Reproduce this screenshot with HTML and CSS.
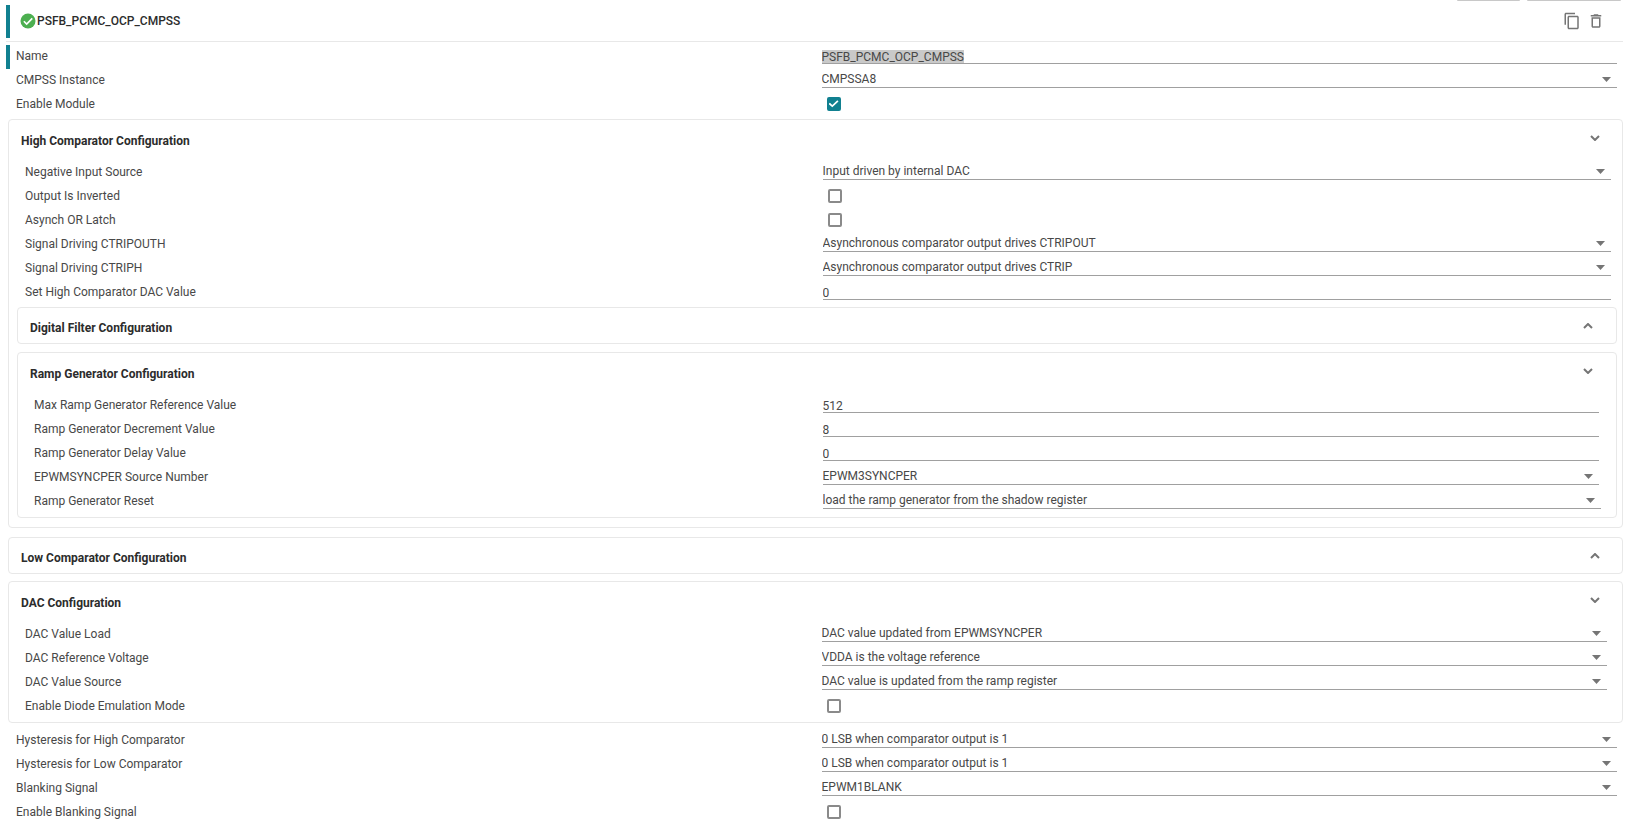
FILE: index.html
```html
<!DOCTYPE html>
<html lang="en">
<head>
<meta charset="utf-8">
<meta name="viewport" content="width=device-width, initial-scale=1">
<title>PSFB_PCMC_OCP_CMPSS</title>
<link rel="stylesheet" href="styles.css">
</head>
<body>
<div class="toolbar-edge" aria-hidden="true"><span class="edge edge-short"></span><span class="edge edge-long"></span></div>
<main class="module">
  <header class="module-header">
    <svg class="status" viewBox="0 0 24 24" aria-hidden="true"><circle cx="12" cy="12" r="10" fill="#4caf50"/><path d="M6.500 12.300l3.700 3.700 7.500-7.600" fill="none" stroke="#fff" stroke-width="2.200"/></svg>
    <h1 class="module-title">PSFB_PCMC_OCP_CMPSS</h1>
    <button class="icon-button" type="button" aria-label="Duplicate"><svg class="icon" viewBox="0 0 24 24"><path d="M16 1H4c-1.100 0-2 .9-2 2v14h2V3h12V1zm3 4H8c-1.100 0-2 .9-2 2v14c0 1.100.9 2 2 2h11c1.100 0 2-.9 2-2V7c0-1.100-.9-2-2-2zm0 16H8V7h11v14z"/></svg></button>
    <button class="icon-button" type="button" aria-label="Delete"><svg class="icon" viewBox="0 0 24 24"><path d="M6 19c0 1.100.9 2 2 2h8c1.100 0 2-.9 2-2V7H6v12zM8 9h8v10H8V9zm7.500-5l-1-1h-5l-1 1H5v2h14V4z"/></svg></button>
  </header>

  <div class="rows rows-top">
    <div class="row changed"><label for="name">Name</label><input class="text" id="name" type="text" value="PSFB_PCMC_OCP_CMPSS"></div>
    <div class="row"><label for="instance">CMPSS Instance</label><span class="drop"><select id="instance"><option>CMPSSA8</option></select></span></div>
    <div class="row"><label for="enable">Enable Module</label><input class="check" id="enable" type="checkbox" checked></div>
  </div>

  <section class="card card-high">
    <button class="card-header" type="button" aria-expanded="true"><span>High Comparator Configuration</span><svg class="chevron" viewBox="0 0 10 6" aria-hidden="true"><path d="M1 1l4 4 4-4"/></svg></button>
    <div class="rows">
      <div class="row"><label for="neg">Negative Input Source</label><span class="drop"><select id="neg"><option>Input driven by internal DAC</option></select></span></div>
      <div class="row"><label for="inv">Output Is Inverted</label><input class="check" id="inv" type="checkbox"></div>
      <div class="row"><label for="latch">Asynch OR Latch</label><input class="check" id="latch" type="checkbox"></div>
      <div class="row"><label for="tripout">Signal Driving CTRIPOUTH</label><span class="drop"><select id="tripout"><option>Asynchronous comparator output drives CTRIPOUT</option></select></span></div>
      <div class="row"><label for="trip">Signal Driving CTRIPH</label><span class="drop"><select id="trip"><option>Asynchronous comparator output drives CTRIP</option></select></span></div>
      <div class="row"><label for="dacval">Set High Comparator DAC Value</label><input class="text" id="dacval" type="text" value="0"></div>
    </div>
    <div class="nested">
      <section class="card">
        <button class="card-header" type="button" aria-expanded="false"><span>Digital Filter Configuration</span><svg class="chevron" viewBox="0 0 10 6" aria-hidden="true"><path d="M1 5l4-4 4 4"/></svg></button>
      </section>
      <section class="card card-ramp">
        <button class="card-header" type="button" aria-expanded="true"><span>Ramp Generator Configuration</span><svg class="chevron" viewBox="0 0 10 6" aria-hidden="true"><path d="M1 1l4 4 4-4"/></svg></button>
        <div class="rows">
          <div class="row"><label for="maxref">Max Ramp Generator Reference Value</label><input class="text" id="maxref" type="text" value="512"></div>
          <div class="row"><label for="decr">Ramp Generator Decrement Value</label><input class="text" id="decr" type="text" value="8"></div>
          <div class="row"><label for="delay">Ramp Generator Delay Value</label><input class="text" id="delay" type="text" value="0"></div>
          <div class="row"><label for="sync">EPWMSYNCPER Source Number</label><span class="drop"><select id="sync"><option>EPWM3SYNCPER</option></select></span></div>
          <div class="row row-wide"><label for="reset">Ramp Generator Reset</label><span class="drop"><select id="reset"><option>load the ramp generator from the shadow register</option></select></span></div>
        </div>
      </section>
    </div>
  </section>

  <section class="card card-low">
    <button class="card-header" type="button" aria-expanded="false"><span>Low Comparator Configuration</span><svg class="chevron" viewBox="0 0 10 6" aria-hidden="true"><path d="M1 5l4-4 4 4"/></svg></button>
  </section>

  <section class="card card-dac">
    <button class="card-header" type="button" aria-expanded="true"><span>DAC Configuration</span><svg class="chevron" viewBox="0 0 10 6" aria-hidden="true"><path d="M1 1l4 4 4-4"/></svg></button>
    <div class="rows">
      <div class="row"><label for="load">DAC Value Load</label><span class="drop"><select id="load"><option>DAC value updated from EPWMSYNCPER</option></select></span></div>
      <div class="row"><label for="ref">DAC Reference Voltage</label><span class="drop"><select id="ref"><option>VDDA is the voltage reference</option></select></span></div>
      <div class="row"><label for="source">DAC Value Source</label><span class="drop"><select id="source"><option>DAC value is updated from the ramp register</option></select></span></div>
      <div class="row"><label for="diode">Enable Diode Emulation Mode</label><input class="check" id="diode" type="checkbox"></div>
    </div>
  </section>

  <div class="rows rows-bottom">
    <div class="row"><label for="hysh">Hysteresis for High Comparator</label><span class="drop"><select id="hysh"><option>0 LSB when comparator output is 1</option></select></span></div>
    <div class="row"><label for="hysl">Hysteresis for Low Comparator</label><span class="drop"><select id="hysl"><option>0 LSB when comparator output is 1</option></select></span></div>
    <div class="row"><label for="blank">Blanking Signal</label><span class="drop"><select id="blank"><option>EPWM1BLANK</option></select></span></div>
    <div class="row"><label for="blanken">Enable Blanking Signal</label><input class="check" id="blanken" type="checkbox"></div>
  </div>
</main>
<script src="script.js"></script>
</body>
</html>
```

FILE: styles.css
```css
* { box-sizing: border-box; }

body {
  margin: 0;
  background: #fff;
  color: #484848;
  font: 12px/20px Roboto, "Liberation Sans", sans-serif;
  overflow-x: hidden;
}

button, input, select { font: inherit; color: inherit; }

/* Lower shadow of the page toolbar's buttons, laid over the top of the panel */
.toolbar-edge {
  position: absolute;
  top: 0;
  right: 6px;
  display: flex;
  gap: 7px;
}
.edge { height: 1px; background: #c8c8c8; border-radius: 0 0 2px 2px; }
.edge-short { width: 63px; }
.edge-long { width: 94px; }

.module { padding: 5px 4px 2px 6px; }

.module-header {
  display: flex;
  align-items: center;
  height: 37px;
  padding: 0 15px 4px 9px;
  border-bottom: 1px solid #e8e8e8;
  position: relative;
}
.module-header::before {
  content: "";
  position: absolute;
  left: 0;
  top: 0;
  width: 4px;
  height: 33px;
  background: #118090;
}
.status { width: 18px; height: 18px; margin-left: 4px; }
.module-title {
  flex: 1;
  margin: 0;
  color: #2c2c2c;
  font-size: 12px;
  font-weight: 500;
}
.icon-button {
  display: grid;
  place-items: center;
  width: 24px;
  height: 24px;
  padding: 0;
  border: 0;
  background: none;
}
.icon { width: 18px; height: 18px; fill: #757575; }

.rows { --start: 8px; }
.rows-top { padding: 2px 6px 0 10px; --indent: 16px; }
.rows-bottom { padding: 0 6px 0 10px; margin-top: 5px; --indent: 16px; }

.row {
  display: grid;
  grid-template-columns: calc(50vw + var(--start) - var(--indent)) 1fr;
  height: 24px;
  position: relative;
}
.row label { line-height: 25px; }
.changed::before {
  content: "";
  position: absolute;
  left: -10px;
  top: 1px;
  width: 4px;
  height: 24px;
  background: #118090;
}

.text, .drop select {
  display: block;
  width: 100%;
  height: 20px;
  margin: 0;
  border: 0;
  border-bottom: 1px solid #a0a0a0;
  border-radius: 0;
  background: none;
  outline: 0;
  appearance: none;
}
.text { padding: 6px 0 0; line-height: 13px; }
.text::selection { background: rgba(200, 200, 200, 0.99); color: #484848; }
.drop { display: block; position: relative; }
.drop select { padding: 3px 20px 0 0; line-height: 16px; }
.drop::after {
  content: "";
  position: absolute;
  right: 6px;
  top: 9px;
  width: 9px;
  height: 5px;
  background: #757575;
  clip-path: polygon(0 0, 100% 0, 50% 100%);
  pointer-events: none;
}

.check {
  width: 14px;
  height: 14px;
  margin: 5px;
  border: 2px solid #8a8a8a;
  border-radius: 2px;
  appearance: none;
  background: #fff;
}
.check:checked {
  display: grid;
  place-items: center;
  border-color: #118090;
  background: #118090;
}
.check:checked::before {
  content: "";
  width: 10px;
  height: 8px;
  background: #fff;
  clip-path: polygon(0 50%, 14% 34%, 38% 62%, 88% 4%, 100% 18%, 38% 92%);
}

.card {
  border: 1px solid #e8e8e8;
  border-radius: 4px;
  background: #fff;
}
.module > .card { margin-left: 2px; }
.card-header {
  display: flex;
  align-items: center;
  justify-content: space-between;
  width: 100%;
  height: 40px;
  padding: 1px 22px 0 12px;
  border: 0;
  background: none;
  color: #2c2c2c;
  font-weight: 700;
  text-align: left;
}
.card-header[aria-expanded="false"] { height: 35px; padding-top: 5px; }
.chevron {
  width: 10px;
  height: 6px;
  margin-bottom: 5px;
  fill: none;
  stroke: #757575;
  stroke-width: 2;
}

.card .rows { --indent: 25px; padding: 0 11px 0 16px; }
.card-high { margin-top: 3px; padding-bottom: 9px; }
.card-high .rows { --start: 9px; }
.nested {
  display: flex;
  flex-direction: column;
  gap: 8px;
  margin: 3px 5px 0 8px;
}
.nested .card-header { padding-right: 23px; }
.card-ramp { padding-bottom: 4px; }
.card-ramp .rows { --indent: 34px; padding-right: 17px; }
.row-wide { margin-right: -2px; }
.card-low { margin-top: 9px; }
.card-dac { margin-top: 7px; padding-bottom: 4px; }
.card-dac .rows { padding-right: 15px; }
```

FILE: script.js
```js
const nameField = document.getElementById("name");
nameField.focus();
nameField.select();
```
